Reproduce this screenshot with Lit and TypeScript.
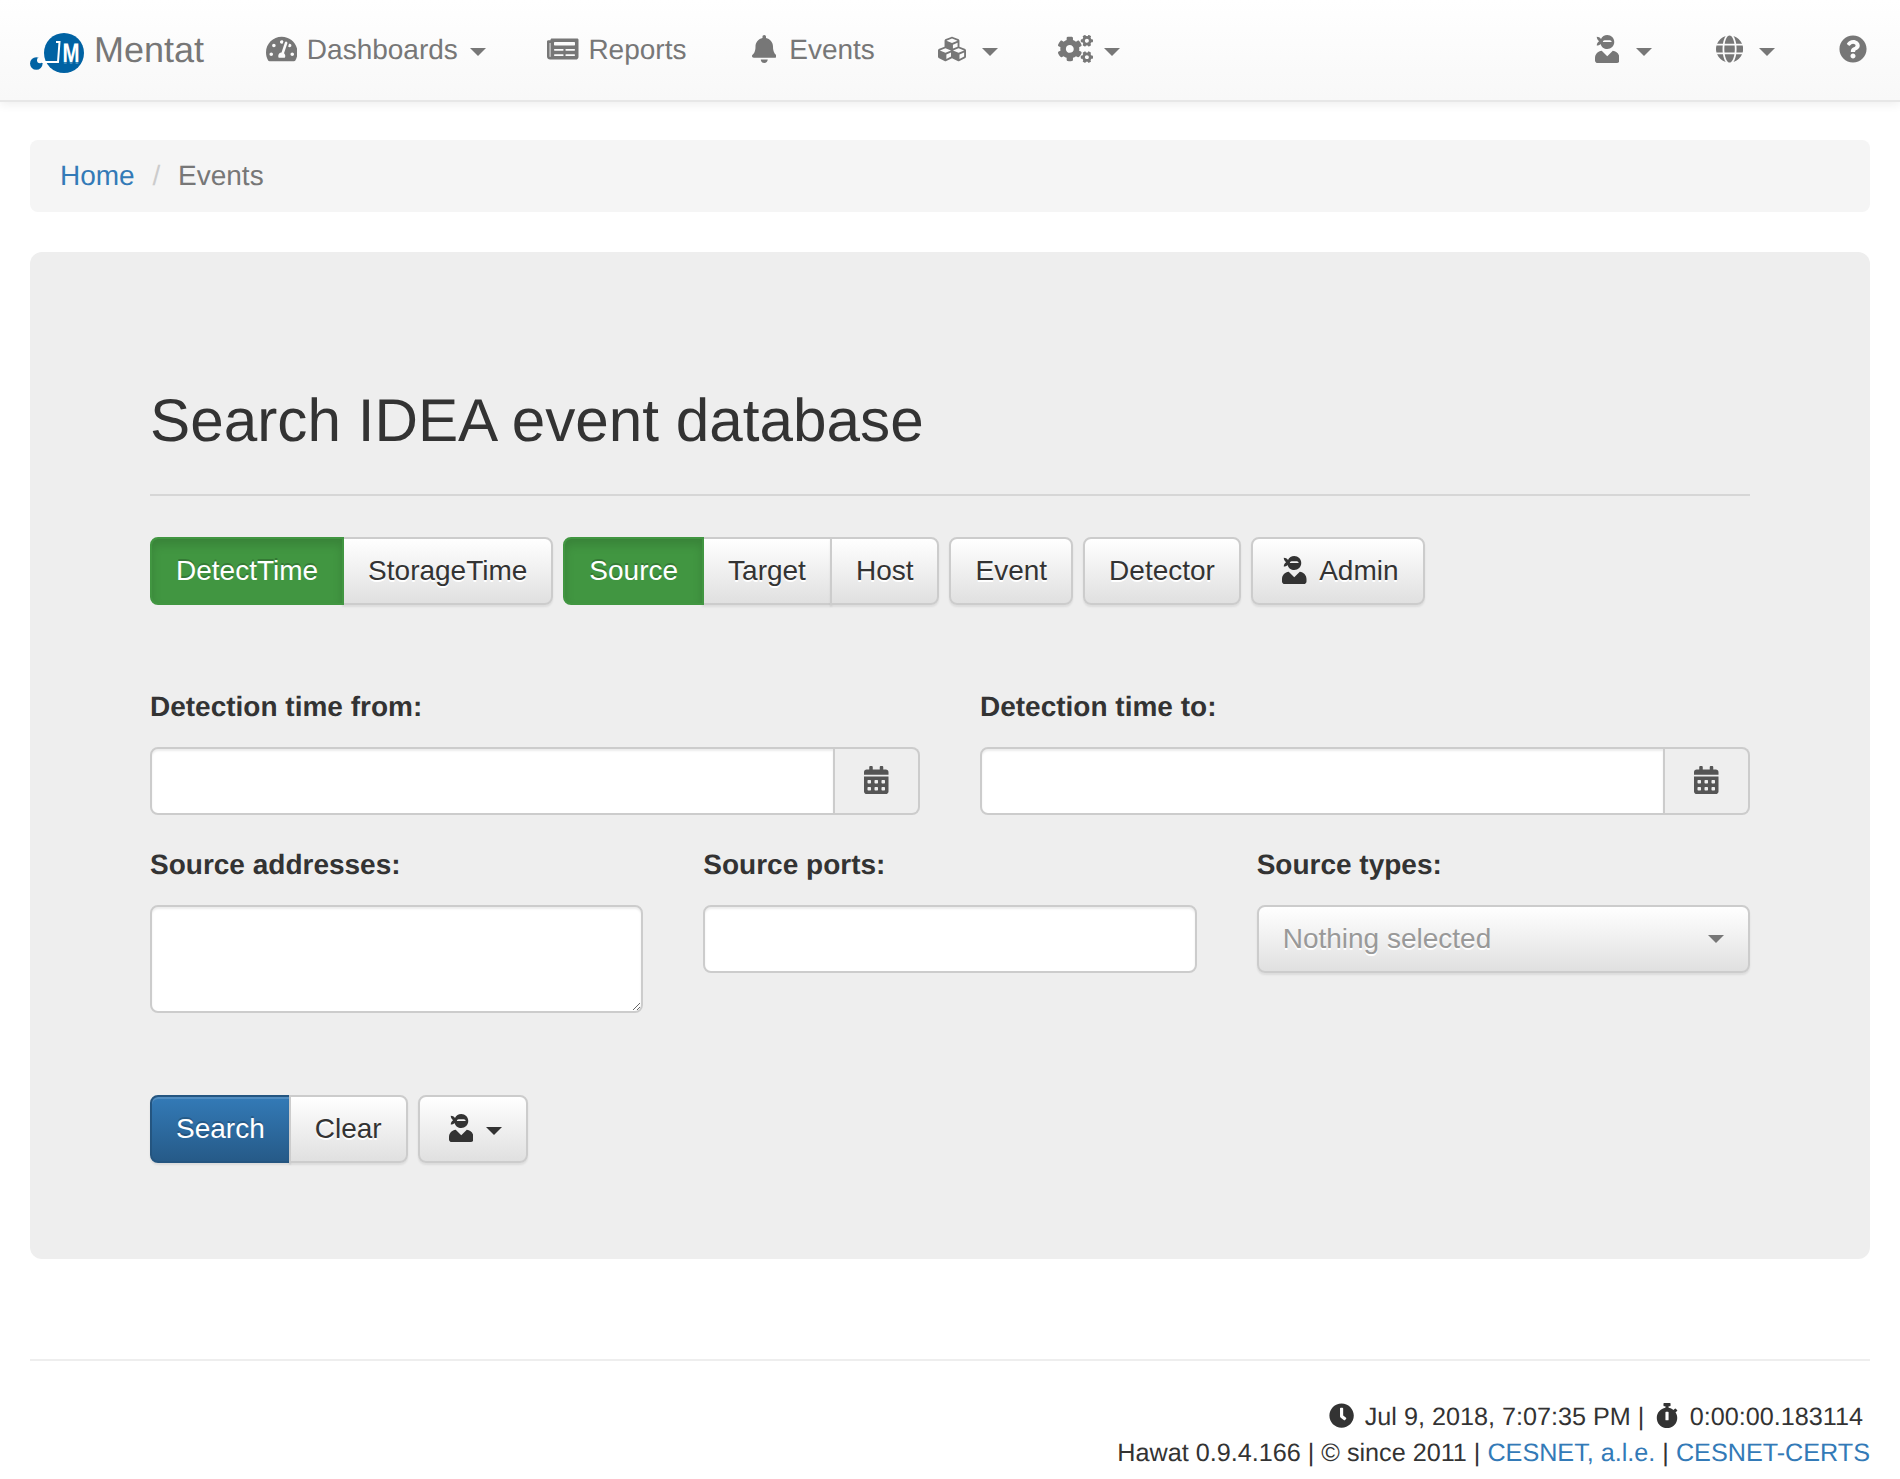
import { LitElement, css, html, svg } from "lit";
import { customElement } from "lit/decorators.js";

const ICONS: Record<string, [number, string]> = {
  tachometer: [576, "M288 32C128.94 32 0 160.94 0 320c0 52.8 14.25 102.26 39.06 144.8 5.61 9.62 16.3 15.2 27.44 15.2h443c11.14 0 21.83-5.58 27.44-15.2C561.75 422.26 576 372.8 576 320c0-159.06-128.94-288-288-288zm0 64c14.71 0 26.58 10.13 30.32 23.65-1.11 2.26-2.64 4.23-3.45 6.67l-9.22 27.67c-5.13 3.49-10.97 6.01-17.64 6.01-17.67 0-32-14.33-32-32S270.33 96 288 96zM96 384c-17.67 0-32-14.33-32-32s14.33-32 32-32 32 14.33 32 32-14.33 32-32 32zm48-160c-17.67 0-32-14.33-32-32s14.33-32 32-32 32 14.33 32 32-14.33 32-32 32zm246.77-72.41l-61.33 184C343.13 347.33 352 364.54 352 384c0 11.72-3.38 22.55-8.88 32H232.88c-5.5-9.45-8.88-20.28-8.88-32 0-33.94 26.5-61.43 59.9-63.59l61.34-184.01c4.17-12.56 17.73-19.45 30.36-15.17 12.57 4.19 19.35 17.79 15.17 30.36zm14.66 57.2l15.52-46.55c3.47-1.29 7.13-2.23 11.05-2.23 17.67 0 32 14.33 32 32s-14.33 32-32 32c-11.38-.01-20.89-6.28-26.57-15.22zM480 384c-17.67 0-32-14.33-32-32s14.33-32 32-32 32 14.33 32 32-14.33 32-32 32z"],
  newspaper: [576, "M552 64H88c-13.255 0-24 10.745-24 24v8H24c-13.255 0-24 10.745-24 24v272c0 30.928 25.072 56 56 56h472c26.51 0 48-21.49 48-48V88c0-13.255-10.745-24-24-24zM56 400a8 8 0 0 1-8-8V144h16v248a8 8 0 0 1-8 8zm236-16H140c-6.627 0-12-5.373-12-12v-8c0-6.627 5.373-12 12-12h152c6.627 0 12 5.373 12 12v8c0 6.627-5.373 12-12 12zm208 0H348c-6.627 0-12-5.373-12-12v-8c0-6.627 5.373-12 12-12h152c6.627 0 12 5.373 12 12v8c0 6.627-5.373 12-12 12zm-208-96H140c-6.627 0-12-5.373-12-12v-8c0-6.627 5.373-12 12-12h152c6.627 0 12 5.373 12 12v8c0 6.627-5.373 12-12 12zm208 0H348c-6.627 0-12-5.373-12-12v-8c0-6.627 5.373-12 12-12h152c6.627 0 12 5.373 12 12v8c0 6.627-5.373 12-12 12zm0-96H140c-6.627 0-12-5.373-12-12v-40c0-6.627 5.373-12 12-12h360c6.627 0 12 5.373 12 12v40c0 6.627-5.373 12-12 12z"],
  bell: [448, "M224 512c35.32 0 63.97-28.65 63.97-64H160.03c0 35.35 28.65 64 63.97 64zm215.39-149.71c-19.32-20.76-55.47-51.99-55.47-154.29 0-77.7-54.48-139.9-127.94-155.16V32c0-17.67-14.32-32-31.98-32s-31.98 14.33-31.98 32v20.84C118.56 68.1 64.08 130.3 64.08 208c0 102.3-36.15 133.53-55.47 154.29-6 6.45-8.66 14.16-8.61 21.71.11 16.4 12.98 32 32.1 32h383.8c19.12 0 32-15.6 32.1-32 .05-7.55-2.61-15.27-8.61-21.71z"],
  cubes: [512, "M488.6 250.2L392 214V105.5c0-15-9.3-28.4-23.4-33.7l-100-37.5c-8.1-3.1-17.1-3.1-25.3 0l-100 37.5c-14.1 5.3-23.4 18.7-23.4 33.7V214l-96.6 36.2C9.3 255.5 0 268.9 0 283.9V394c0 13.6 7.7 26.1 19.9 32.2l100 50c10.1 5.1 22.1 5.1 32.2 0l103.9-52 103.9 52c10.1 5.1 22.1 5.1 32.2 0l100-50c12.2-6.1 19.9-18.6 19.9-32.2V283.9c0-15-9.3-28.4-23.4-33.7zM358 214.8l-85 31.9v-68.2l85-37v73.3zM154 104.1l102-38.2 102 38.2v.6l-102 41.4-102-41.4v-.6zm84 291.1l-85 42.5v-79.1l85-38.8v75.4zm0-112l-102 41.4-102-41.4v-.6l102-38.2 102 38.2v.6zm240 112l-85 42.5v-79.1l85-38.8v75.4zm0-112l-102 41.4-102-41.4v-.6l102-38.2 102 38.2v.6z"],
  cogs: [640, "M512.1 191l-8.2 14.3c-3 5.3-9.4 7.5-15.1 5.4-11.8-4.4-22.6-10.7-32.1-18.6-4.6-3.8-5.8-10.5-2.8-15.7l8.2-14.3c-6.9-8-12.3-17.3-15.9-27.4h-16.5c-6 0-11.2-4.3-12.2-10.3-2-12-2.1-24.6 0-37.1 1-6 6.2-10.4 12.2-10.4h16.5c3.6-10.1 9-19.4 15.9-27.4l-8.2-14.3c-3-5.2-1.9-11.9 2.8-15.7 9.5-7.9 20.4-14.2 32.1-18.6 5.7-2.1 12.1.1 15.1 5.4l8.2 14.3c10.5-1.9 21.2-1.9 31.7 0L552 6.3c3-5.3 9.4-7.5 15.1-5.4 11.8 4.4 22.6 10.7 32.1 18.6 4.6 3.8 5.8 10.5 2.8 15.7l-8.2 14.3c6.9 8 12.3 17.3 15.9 27.4h16.5c6 0 11.2 4.3 12.2 10.3 2 12 2.1 24.6 0 37.1-1 6-6.2 10.4-12.2 10.4h-16.5c-3.6 10.1-9 19.4-15.9 27.4l8.2 14.3c3 5.2 1.9 11.9-2.8 15.7-9.5 7.9-20.4 14.2-32.1 18.6-5.7 2.1-12.1-.1-15.1-5.4l-8.2-14.3c-10.4 1.9-21.2 1.9-31.7 0zm-10.5-58.8c38.5 29.6 82.4-14.3 52.8-52.8-38.5-29.7-82.4 14.3-52.8 52.8zM386.3 286.1l33.7 16.8c10.1 5.8 14.5 18.1 10.5 29.1-8.9 24.2-26.4 46.4-42.6 65.8-7.4 8.9-20.2 11.1-30.3 5.3l-29.1-16.8c-16 13.7-34.6 24.6-54.9 31.7v33.6c0 11.6-8.3 21.6-19.7 23.6-24.6 4.2-50.4 4.4-75.9 0-11.5-2-20-11.9-20-23.6V418c-20.3-7.2-38.9-18-54.9-31.7L74 403c-10 5.8-22.9 3.6-30.3-5.3-16.2-19.4-33.3-41.6-42.2-65.7-4-10.9.4-23.2 10.5-29.1l33.3-16.8c-3.9-20.9-3.9-42.4 0-63.4L12 205.8c-10.1-5.8-14.6-18.1-10.5-29 8.9-24.2 26-46.4 42.2-65.8 7.4-8.9 20.2-11.1 30.3-5.3l29.1 16.8c16-13.7 34.6-24.6 54.9-31.7V57.1c0-11.5 8.2-21.5 19.6-23.5 24.6-4.2 50.5-4.4 76-.1 11.5 2 20 11.9 20 23.6v33.6c20.3 7.2 38.9 18 54.9 31.7l29.1-16.8c10-5.8 22.9-3.6 30.3 5.3 16.2 19.4 33.2 41.6 42.1 65.8 4 10.9.1 23.2-10 29.1l-33.7 16.8c3.9 21 3.9 42.5 0 63.5zm-117.6 21.1c59.2-77-28.7-164.9-105.7-105.7-59.2 77 28.7 164.9 105.7 105.7zm243.4 182.7l-8.2 14.3c-3 5.3-9.4 7.5-15.1 5.4-11.8-4.4-22.6-10.7-32.1-18.6-4.6-3.8-5.8-10.5-2.8-15.7l8.2-14.3c-6.9-8-12.3-17.3-15.9-27.4h-16.5c-6 0-11.2-4.3-12.2-10.3-2-12-2.1-24.6 0-37.1 1-6 6.2-10.4 12.2-10.4h16.5c3.6-10.1 9-19.4 15.9-27.4l-8.2-14.3c-3-5.2-1.9-11.9 2.8-15.7 9.5-7.9 20.4-14.2 32.1-18.6 5.7-2.1 12.1.1 15.1 5.4l8.2 14.3c10.5-1.9 21.2-1.9 31.7 0l8.2-14.3c3-5.3 9.4-7.5 15.1-5.4 11.8 4.4 22.6 10.7 32.1 18.6 4.6 3.8 5.8 10.5 2.8 15.7l-8.2 14.3c6.9 8 12.3 17.3 15.9 27.4h16.5c6 0 11.2 4.3 12.2 10.3 2 12 2.1 24.6 0 37.1-1 6-6.2 10.4-12.2 10.4h-16.5c-3.6 10.1-9 19.4-15.9 27.4l8.2 14.3c3 5.2 1.9 11.9-2.8 15.7-9.5 7.9-20.4 14.2-32.1 18.6-5.7 2.1-12.1-.1-15.1-5.4l-8.2-14.3c-10.4 1.9-21.2 1.9-31.7 0zM501.6 431c38.5 29.6 82.4-14.3 52.8-52.8-38.5-29.6-82.4 14.3-52.8 52.8z"],
  ninja: [448, "M325.4 289.2L224 390.6 122.6 289.2C54 295.3 0 352.2 0 422.4V464c0 26.5 21.5 48 48 48h352c26.5 0 48-21.5 48-48v-41.6c0-70.2-54-127.1-122.6-133.2zM32 192c27.3 0 51.8-11.5 69.2-29.7 15.1 53.9 64 93.7 122.8 93.7 70.7 0 128-57.3 128-128S294.7 0 224 0c-50.4 0-93.6 29.4-114.5 71.8C92.1 47.8 64 32 32 32c0 33.4 17.1 62.8 43.1 80-26 17.2-43.1 46.6-43.1 80zm144-96h96c17.7 0 32 14.3 32 32H144c0-17.7 14.3-32 32-32z"],
  globe: [496, "M336.5 160C322 70.7 287.8 8 248 8s-74 62.7-88.5 152h177zM152 256c0 22.2 1.2 43.5 3.3 64h185.3c2.1-20.5 3.3-41.8 3.3-64s-1.2-43.5-3.3-64H155.3c-2.1 20.5-3.3 41.8-3.3 64zm324.7-96c-28.6-67.9-86.5-120.4-158-141.6 24.4 33.8 41.2 84.7 50 141.6h108zM177.2 18.4C105.8 39.6 47.8 92.1 19.3 160h108c8.7-56.9 25.5-107.8 49.9-141.6zM487.4 192H372.7c2.1 21 3.3 42.5 3.3 64s-1.2 43-3.3 64h114.6c5.5-20.5 8.6-41.8 8.6-64s-3.1-43.5-8.5-64zM120 256c0-21.5 1.2-43 3.3-64H8.6C3.2 212.5 0 233.8 0 256s3.2 43.5 8.6 64h114.6c-2-21-3.2-42.5-3.2-64zm39.5 96c14.5 89.3 48.7 152 88.5 152s74-62.7 88.5-152h-177zm159.3 141.6c71.4-21.2 129.4-73.7 158-141.6h-108c-8.8 56.9-25.6 107.8-50 141.6zM19.3 352c28.6 67.9 86.5 120.4 158 141.6-24.4-33.8-41.2-84.7-50-141.6h-108z"],
  question: [512, "M504 256c0 136.997-111.043 248-248 248S8 392.997 8 256C8 119.083 119.043 8 256 8s248 111.083 248 248zM262.655 90c-54.497 0-89.255 22.957-116.549 63.758-3.536 5.286-2.353 12.415 2.715 16.258l34.699 26.31c5.205 3.947 12.621 3.008 16.665-2.122 17.864-22.658 30.113-35.797 57.303-35.797 20.429 0 45.698 13.148 45.698 32.958 0 14.976-12.363 22.667-32.534 33.976C247.128 238.528 216 254.941 216 296v4c0 6.627 5.373 12 12 12h56c6.627 0 12-5.373 12-12v-1.333c0-28.462 83.186-29.647 83.186-106.667 0-58.002-60.165-102-116.531-102zM256 338c-25.365 0-46 20.635-46 46 0 25.364 20.635 46 46 46s46-20.636 46-46c0-25.365-20.635-46-46-46z"],
  calendar: [448, "M0 464c0 26.5 21.5 48 48 48h352c26.5 0 48-21.5 48-48V192H0v272zm320-196c0-6.6 5.4-12 12-12h40c6.6 0 12 5.4 12 12v40c0 6.6-5.4 12-12 12h-40c-6.6 0-12-5.4-12-12v-40zm0 128c0-6.6 5.4-12 12-12h40c6.6 0 12 5.4 12 12v40c0 6.6-5.4 12-12 12h-40c-6.6 0-12-5.4-12-12v-40zM192 268c0-6.6 5.4-12 12-12h40c6.6 0 12 5.4 12 12v40c0 6.6-5.4 12-12 12h-40c-6.6 0-12-5.4-12-12v-40zm0 128c0-6.6 5.4-12 12-12h40c6.6 0 12 5.4 12 12v40c0 6.6-5.4 12-12 12h-40c-6.6 0-12-5.4-12-12v-40zM64 268c0-6.6 5.4-12 12-12h40c6.6 0 12 5.4 12 12v40c0 6.6-5.4 12-12 12H76c-6.6 0-12-5.4-12-12v-40zm0 128c0-6.6 5.4-12 12-12h40c6.6 0 12 5.4 12 12v40c0 6.6-5.4 12-12 12H76c-6.6 0-12-5.4-12-12v-40zM400 64h-48V16c0-8.8-7.2-16-16-16h-32c-8.8 0-16 7.2-16 16v48H160V16c0-8.8-7.2-16-16-16h-32c-8.8 0-16 7.2-16 16v48H48C21.5 64 0 85.5 0 112v48h448v-48c0-26.5-21.5-48-48-48z"],
  clock: [512, "M256,8C119,8,8,119,8,256S119,504,256,504,504,393,504,256,393,8,256,8Zm92.49,313h0l-20,25a16,16,0,0,1-22.49,2.5h0l-67-49.72a40,40,0,0,1-15-31.23V112a16,16,0,0,1,16-16h32a16,16,0,0,1,16,16V256l58,42.5A16,16,0,0,1,348.49,321Z"],
  stopwatch: [448, "M432 304c0 114.9-93.1 208-208 208S16 418.9 16 304c0-104 76.3-190.2 176-205.5V64h-28c-6.6 0-12-5.4-12-12V12c0-6.6 5.4-12 12-12h120c6.6 0 12 5.4 12 12v40c0 6.6-5.4 12-12 12h-28v34.5c37.5 5.8 71.7 21.6 99.7 44.6l27.5-27.5c4.7-4.7 12.3-4.7 17 0l28.3 28.3c4.7 4.7 4.7 12.3 0 17l-29.4 29.4-.6.6C419.7 223.3 432 262.2 432 304zm-176 36V188.5c0-6.6-5.4-12-12-12h-40c-6.6 0-12 5.4-12 12V340c0 6.6 5.4 12 12 12h40c6.6 0 12-5.4 12-12z"],
};

// font awesome style icon, boxed to 1.25em like fa-fw
const icon = (name: string) => {
  const [w, d] = ICONS[name];
  return html`<span class="fw"
    ><svg class="ico" viewBox="0 0 ${w} 512">${svg`<path d=${d}></path>`}</svg></span
  >`;
};

const caret = html`<span class="caret"></span>`;

@customElement("app-root")
export class AppRoot extends LitElement {
  static styles = css`
    :host {
      display: block;
      min-height: 1479px;
      background: #fff;
      color: #333;
      font: 28px/40px "Liberation Sans", Arial, sans-serif;
      text-rendering: geometricPrecision;
    }
    * {
      box-sizing: border-box;
    }
    a {
      color: #337ab7;
      text-decoration: none;
    }
    .fw {
      display: inline-block;
      width: 1.25em;
      text-align: center;
    }
    .ico {
      height: 1em;
      vertical-align: -0.125em;
      fill: currentColor;
    }
    .caret {
      display: inline-block;
      margin-left: 4px;
      vertical-align: middle;
      border-top: 8px solid;
      border-left: 8px solid transparent;
      border-right: 8px solid transparent;
    }

    .navbar {
      display: flex;
      height: 102px;
      margin-bottom: 38px;
      border-bottom: 2px solid #e7e7e7;
      background: linear-gradient(#fff, #f8f8f8);
      box-shadow: 0 2px 10px rgba(0, 0, 0, 0.075);
    }
    .brand {
      display: flex;
      align-items: center;
      gap: 10px;
      padding: 0 30px;
      color: #777;
      font-size: 36px;
      text-shadow: 0 2px 0 rgba(255, 255, 255, 0.25);
    }
    .logo {
      width: 54px;
      height: 40px;
      margin-top: 6px;
    }
    .nav-link {
      display: block;
      padding: 30px;
      color: #777;
      white-space: nowrap;
      text-shadow: 0 2px 0 rgba(255, 255, 255, 0.25);
    }
    .nav-right {
      display: flex;
      margin-left: auto;
    }

    .breadcrumb {
      margin: 0 30px 40px;
      padding: 16px 30px;
      border-radius: 8px;
      background: #f5f5f5;
      color: #777;
    }
    .breadcrumb .sep {
      padding: 0 10px;
      color: #ccc;
    }

    .jumbotron {
      margin: 0 30px;
      padding: 96px 120px;
      border-radius: 12px;
      background: #eee;
    }
    h1 {
      margin: 39px 0 41px;
      font-size: 60.25px;
      line-height: 66px;
      font-weight: 400;
    }
    .rule {
      height: 2px;
      margin-bottom: 41px;
      background: #d6d6d6;
    }
    .toolbar {
      display: flex;
      gap: 10px;
      margin-bottom: 82px;
    }
    .toolbar.last {
      margin-bottom: 0;
    }
    .group {
      display: flex;
    }
    .btn {
      display: block;
      height: 68px;
      padding: 12px 24px;
      border: 2px solid #ccc;
      border-radius: 8px;
      background: linear-gradient(#fff, #e0e0e0);
      box-shadow: inset 0 2px 0 rgba(255, 255, 255, 0.15), 0 2px 2px rgba(0, 0, 0, 0.075);
      color: #333;
      font: inherit;
      white-space: nowrap;
      text-shadow: 0 2px 0 #fff;
    }
    .group .btn:not(:first-child) {
      margin-left: -2px;
      border-top-left-radius: 0;
      border-bottom-left-radius: 0;
    }
    .group .btn:not(:last-child) {
      border-top-right-radius: 0;
      border-bottom-right-radius: 0;
    }
    .btn.on {
      position: relative;
      border-color: #419641;
      background: #419641;
      box-shadow: inset 0 6px 10px rgba(0, 0, 0, 0.125);
      color: #fff;
      text-shadow: 0 -2px 0 rgba(0, 0, 0, 0.2);
    }
    .btn.primary {
      border-color: #245580;
      background: linear-gradient(#337ab7, #265a88);
      box-shadow: inset 0 2px 0 rgba(255, 255, 255, 0.15), 0 2px 2px rgba(0, 0, 0, 0.075);
      color: #fff;
      text-shadow: 0 -2px 0 rgba(0, 0, 0, 0.2);
    }
    .btn.menu .caret {
      margin-left: 7px;
    }
    .btn.admin .fw {
      margin-right: 1px;
    }

    .row {
      display: grid;
      gap: 60px;
      margin-bottom: 30px;
    }
    .two {
      grid-template-columns: 1fr 1fr;
    }
    .three {
      grid-template-columns: 1fr 1fr 1fr;
      margin-bottom: 82px;
    }
    label {
      display: block;
      margin-bottom: 20px;
      font-weight: 700;
    }
    .control {
      display: block;
      width: 100%;
      height: 68px;
      margin: 0;
      padding: 12px 24px;
      border: 2px solid #ccc;
      border-radius: 8px;
      background: #fff;
      box-shadow: inset 0 2px 2px rgba(0, 0, 0, 0.075);
      font: inherit;
      outline: none;
    }
    textarea.control {
      height: 108px;
    }
    .input-group {
      display: flex;
    }
    .input-group .control {
      flex: 1;
      min-width: 0;
      border-top-right-radius: 0;
      border-bottom-right-radius: 0;
    }
    .addon {
      height: 68px;
      padding: 12px 24px;
      border: 2px solid #ccc;
      border-left: 0;
      border-radius: 0 8px 8px 0;
      background: #eee;
      color: #555;
      white-space: nowrap;
    }
    .select {
      display: flex;
      align-items: center;
      justify-content: space-between;
      width: 100%;
      color: #999;
      text-align: left;
    }
    .select .caret {
      color: #777;
      margin: 0;
    }

    footer {
      margin: 100px 30px 0;
      padding-top: 38px;
      border-top: 2px solid #eee;
      font-size: 25.2px;
      line-height: 36px;
      text-align: right;
    }
    .stamp {
      padding-right: 7px;
    }
  `;

  render() {
    return html`
      <nav class="navbar">
        <a class="brand" href="#">
          <svg class="logo" viewBox="0 0 54 40">
            <circle cx="34" cy="20" r="20" fill="#0062a3"></circle>
            <circle cx="6.3" cy="30.5" r="6.3" fill="#0062a3"></circle>
            <circle cx="10" cy="27.3" r="3" fill="#fbfbfb"></circle>
            <path d="M12 29 H28 L29.5 9 H26" fill="none" stroke="#fff" stroke-width="2"></path>
            <text x="41" y="29" fill="#fff" font-family="Liberation Sans" font-size="27" font-weight="700" text-anchor="middle" textLength="17" lengthAdjust="spacingAndGlyphs">M</text>
          </svg>
          Mentat
        </a>
        <a class="nav-link" href="#">${icon("tachometer")} Dashboards ${caret}</a>
        <a class="nav-link" href="#">${icon("newspaper")} Reports</a>
        <a class="nav-link" href="#">${icon("bell")} Events</a>
        <a class="nav-link" href="#">${icon("cubes")} ${caret}</a>
        <a class="nav-link" href="#">${icon("cogs")} ${caret}</a>
        <div class="nav-right">
          <a class="nav-link" href="#">${icon("ninja")} ${caret}</a>
          <a class="nav-link" href="#">${icon("globe")} ${caret}</a>
          <a class="nav-link" href="#">${icon("question")}</a>
        </div>
      </nav>

      <div class="breadcrumb"><a href="#">Home</a> <span class="sep">/</span> Events</div>

      <main class="jumbotron">
        <h1>Search IDEA event database</h1>
        <div class="rule"></div>

        <div class="toolbar">
          <div class="group">
            <button class="btn on">DetectTime</button>
            <button class="btn">StorageTime</button>
          </div>
          <div class="group">
            <button class="btn on">Source</button>
            <button class="btn">Target</button>
            <button class="btn">Host</button>
          </div>
          <button class="btn">Event</button>
          <button class="btn">Detector</button>
          <button class="btn admin">${icon("ninja")} Admin</button>
        </div>

        <div class="row two">
          <div>
            <label>Detection time from:</label>
            <div class="input-group">
              <input class="control" type="text" />
              <span class="addon">${icon("calendar")}</span>
            </div>
          </div>
          <div>
            <label>Detection time to:</label>
            <div class="input-group">
              <input class="control" type="text" />
              <span class="addon">${icon("calendar")}</span>
            </div>
          </div>
        </div>

        <div class="row three">
          <div>
            <label>Source addresses:</label>
            <textarea class="control"></textarea>
          </div>
          <div>
            <label>Source ports:</label>
            <input class="control" type="text" />
          </div>
          <div>
            <label>Source types:</label>
            <button class="btn select">Nothing selected ${caret}</button>
          </div>
        </div>

        <div class="toolbar last">
          <div class="group">
            <button class="btn primary">Search</button>
            <button class="btn">Clear</button>
          </div>
          <button class="btn menu">${icon("ninja")}${caret}</button>
        </div>
      </main>

      <footer>
        <div class="stamp">
          ${icon("clock")} Jul 9, 2018, 7:07:35 PM | ${icon("stopwatch")} 0:00:00.183114
        </div>
        <div>
          Hawat 0.9.4.166 | © since 2011 | <a href="#">CESNET, a.l.e.</a> |
          <a href="#">CESNET-CERTS</a>
        </div>
      </footer>
    `;
  }
}
